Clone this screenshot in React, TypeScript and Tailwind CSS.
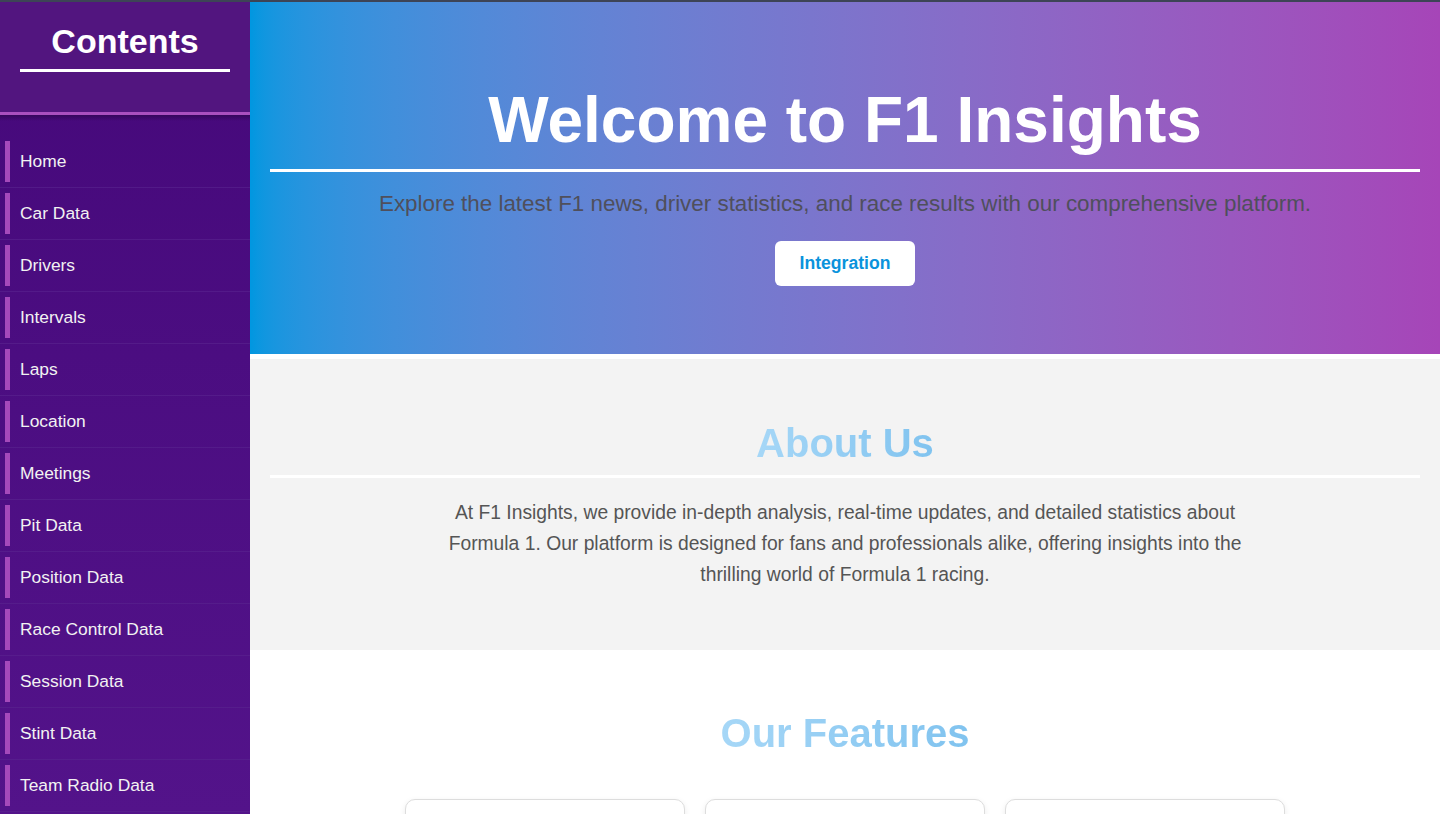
import React from "react";

const navItems = [
  "Home",
  "Car Data",
  "Drivers",
  "Intervals",
  "Laps",
  "Location",
  "Meetings",
  "Pit Data",
  "Position Data",
  "Race Control Data",
  "Session Data",
  "Stint Data",
  "Team Radio Data",
  "Weather Data",
];

const features = [
  { title: "Live Timing", text: "Follow every lap with real-time intervals, positions and sector times." },
  { title: "Driver Statistics", text: "Explore detailed stats and career data for every driver on the grid." },
  { title: "Race Results", text: "Browse results, pit stops and stint data from every session." },
];

export default function App() {
  return (
    <div
      className="min-h-screen bg-white"
      style={{ fontFamily: '"Liberation Sans", Arial, Helvetica, sans-serif' }}
    >
      <div className="h-[2px] bg-[#3d4456]" />
      <div className="flex">
        <aside className="sticky top-0 flex h-[812px] w-[250px] shrink-0 flex-col overflow-hidden bg-gradient-to-b from-[#45087a] to-[#53138a]">
          <div className="h-[113px] shrink-0 border-b-[3px] border-[#a94fbf] bg-[#52157f] px-[20px] pt-[20px]">
            <h2 className="border-b-[3px] border-white pb-[8px] text-center text-[34px] font-bold leading-[39px] text-white">
              Contents
            </h2>
          </div>
          <div className="h-[6px] shrink-0 bg-gradient-to-b from-[#35065c] to-transparent" />
          <ul className="pt-[15px]">
            {navItems.map((item) => (
              <li key={item} className="border-b border-[#5a2590]/60 p-[5px]">
                <a className="block border-l-[5px] border-[#a549bb] px-[10px] py-[10px] text-[17.4px] leading-[21px] text-[#f2f2f2]">
                  {item}
                </a>
              </li>
            ))}
          </ul>
        </aside>

        <main className="min-w-0 flex-1">
          <section className="bg-gradient-to-r from-[#0097e0] to-[#a645b8] px-[20px] pb-[68px] pt-[81px] text-center">
            <h1 className="border-b-[3px] border-white pb-[12px] text-[64px] font-bold leading-[74px] text-white">
              Welcome to F1 Insights
            </h1>
            <p className="mt-[17px] text-[22.4px] leading-[30px] text-[#4f4f5c]">
              Explore the latest F1 news, driver statistics, and race results with our comprehensive platform.
            </p>
            <button className="mt-[22px] rounded-[6px] bg-white px-[25px] py-[12px] text-[17.6px] font-bold leading-[21px] text-[#0a93dc]">
              Integration
            </button>
          </section>

          <section className="mt-[5px] bg-[#f3f3f3] px-[20px] pb-[60px] pt-[61px] text-center">
            <h2 className="border-b-[3px] border-white pb-[9px] text-[40px] font-bold leading-[46px]">
              <span className="bg-gradient-to-r from-[#a6d7f7] to-[#80c3ef] bg-clip-text text-transparent">
                About Us
              </span>
            </h2>
            <p className="mx-auto mt-[19px] max-w-[800px] text-[19.3px] leading-[31px] text-[#555555]">
              At F1 Insights, we provide in-depth analysis, real-time updates, and detailed statistics about
              Formula 1. Our platform is designed for fans and professionals alike, offering insights into the
              thrilling world of Formula 1 racing.
            </p>
          </section>

          <section className="bg-white px-[20px] pb-[60px] pt-[60px] text-center">
            <h2 className="mb-[43px] text-[40px] font-bold leading-[46px]">
              <span className="bg-gradient-to-r from-[#a6d7f7] to-[#80c3ef] bg-clip-text text-transparent">
                Our Features
              </span>
            </h2>
            <div className="mx-auto grid w-[880px] grid-cols-3 gap-[20px]">
              {features.map((f) => (
                <div
                  key={f.title}
                  className="rounded-[10px] border border-[#dddddd] bg-white p-[20px] shadow-[0_2px_6px_rgba(0,0,0,0.08)]"
                >
                  <h3 className="mt-[10px] text-[22px] font-bold text-[#0a93dc]">{f.title}</h3>
                  <p className="mt-[10px] text-[16px] leading-[26px] text-[#555555]">{f.text}</p>
                </div>
              ))}
            </div>
          </section>
        </main>
      </div>
    </div>
  );
}
